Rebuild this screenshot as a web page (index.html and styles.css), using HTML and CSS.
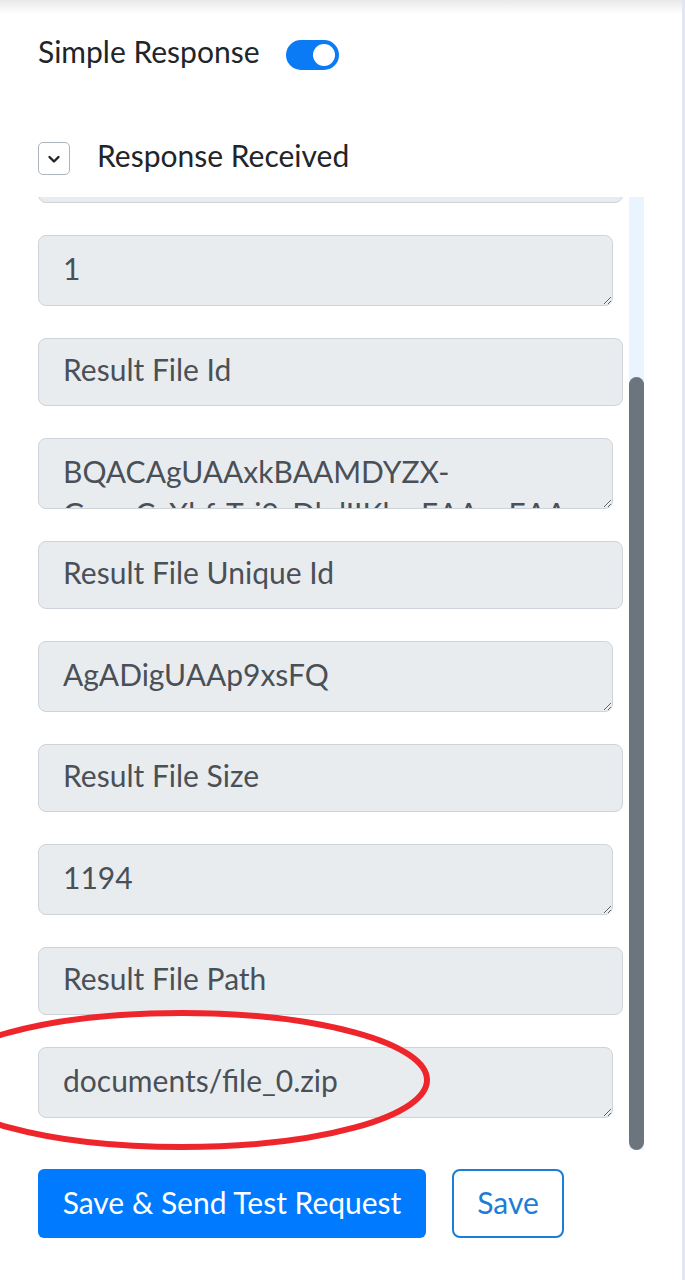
FILE: index.html
```html
<!DOCTYPE html>
<html>
<head>
<meta charset="utf-8">
<link rel="stylesheet" href="styles.css">
</head>
<body>
<div class="page">
  <div class="row simple">
    <span class="label">Simple Response</span>
    <span class="toggle"><span class="knob"></span></span>
  </div>
  <div class="row received">
    <span class="chk"><svg width="16" height="16" viewBox="0 0 16 16"><path d="M3.5 6 L8 10.5 L12.5 6" fill="none" stroke="#212529" stroke-width="2.4" stroke-linecap="round" stroke-linejoin="round"/></svg></span>
    <span class="label">Response Received</span>
  </div>
  <div class="panel">
    <div class="list">
      <div class="items">
        <input class="field" value="Result Message Id" readonly>
        <textarea class="field area" readonly>1</textarea>
        <input class="field" value="Result File Id" readonly>
        <textarea class="field area" readonly>BQACAgUAAxkBAAMDYZX-GcwsCzXhfzTzi9zDkdIIKkwEAAqzEAAg</textarea>
        <input class="field" value="Result File Unique Id" readonly>
        <textarea class="field area" readonly>AgADigUAAp9xsFQ</textarea>
        <input class="field" value="Result File Size" readonly>
        <textarea class="field area" readonly>1194</textarea>
        <input class="field" value="Result File Path" readonly>
        <textarea class="field area" readonly>documents/file_0.zip</textarea>
      </div>
    </div>
    <div class="track"><div class="thumb"></div></div>
  </div>
  <div class="actions">
    <button class="btn primary">Save &amp; Send Test Request</button>
    <button class="btn outline">Save</button>
  </div>
  <svg class="mark" width="450" height="170" viewBox="0 0 450 170"><ellipse cx="182" cy="80" rx="245" ry="67" fill="none" stroke="#ee262c" stroke-width="6"/></svg>
</div>
</body>
</html>
```
FILE: styles.css
```css
html, body {
  margin: 0;
  padding: 0;
  background: #fff;
}
body {
  font-family: Lato, "Open Sans", sans-serif;
  color: #212529;
}
.page {
  position: relative;
  width: 685px;
  height: 1280px;
  overflow: hidden;
  box-sizing: border-box;
  padding: 38px 0 0 38px;
  border-right: 3px solid #e1e5f4;
  background: linear-gradient(#e9e9ea, #ffffff 14px);
}
.row {
  display: flex;
  align-items: center;
}
.simple {
  height: 34px;
  gap: 27px;
}
.label {
  font-size: 30px;
  line-height: 1;
  padding-bottom: 8px;
}
.toggle {
  width: 53px;
  height: 30px;
  border-radius: 15px;
  background: #0a7af5;
  box-sizing: border-box;
  padding: 4px;
  display: flex;
  justify-content: flex-end;
}
.knob {
  width: 22px;
  height: 22px;
  border-radius: 50%;
  background: #fff;
}
.received {
  margin-top: 70px;
  height: 33px;
  gap: 27px;
}
.chk {
  width: 32px;
  height: 33px;
  box-sizing: border-box;
  border: 1.5px solid #aeb5bd;
  border-radius: 5px;
  display: flex;
  align-items: center;
  justify-content: center;
}
.panel {
  margin-top: 22px;
  display: flex;
  height: 953px;
}
.list {
  width: 585px;
  overflow: hidden;
}
.items {
  margin-top: -62px;
  display: flex;
  flex-direction: column;
  gap: 32px;
}
.field {
  display: block;
  box-sizing: border-box;
  width: 585px;
  height: 68px;
  margin: 0;
  padding: 9px 24px 15px;
  border: 1px solid #cfd4da;
  border-radius: 8px;
  background: #e9ecef;
  color: #495057;
  font-family: Lato, "Open Sans", sans-serif;
  font-size: 30px;
  line-height: 42px;
  outline: none;
}
.area {
  width: 575px;
  height: 71px;
  padding-top: 11px;
  overflow: hidden;
  resize: vertical;
}
.track {
  margin-left: 6px;
  width: 15px;
  background: #eaf4ff;
  box-sizing: border-box;
  padding-top: 180px;
}
.thumb {
  height: 773px;
  border-radius: 8px;
  background: #6c757d;
}
.actions {
  margin-top: 19px;
  display: flex;
  gap: 26px;
}
.btn {
  font-family: Lato, "Open Sans", sans-serif;
  font-size: 30px;
  height: 69px;
  box-sizing: border-box;
  cursor: pointer;
  padding: 0 0 4px;
}
.primary {
  width: 388px;
  border: none;
  border-radius: 6px;
  background: #007bff;
  color: #fff;
}
.outline {
  width: 112px;
  border: 2px solid #1a7dd6;
  border-radius: 8px;
  background: #fff;
  color: #1a7dd6;
}
.mark {
  position: absolute;
  left: 0;
  top: 1000px;
}
```
